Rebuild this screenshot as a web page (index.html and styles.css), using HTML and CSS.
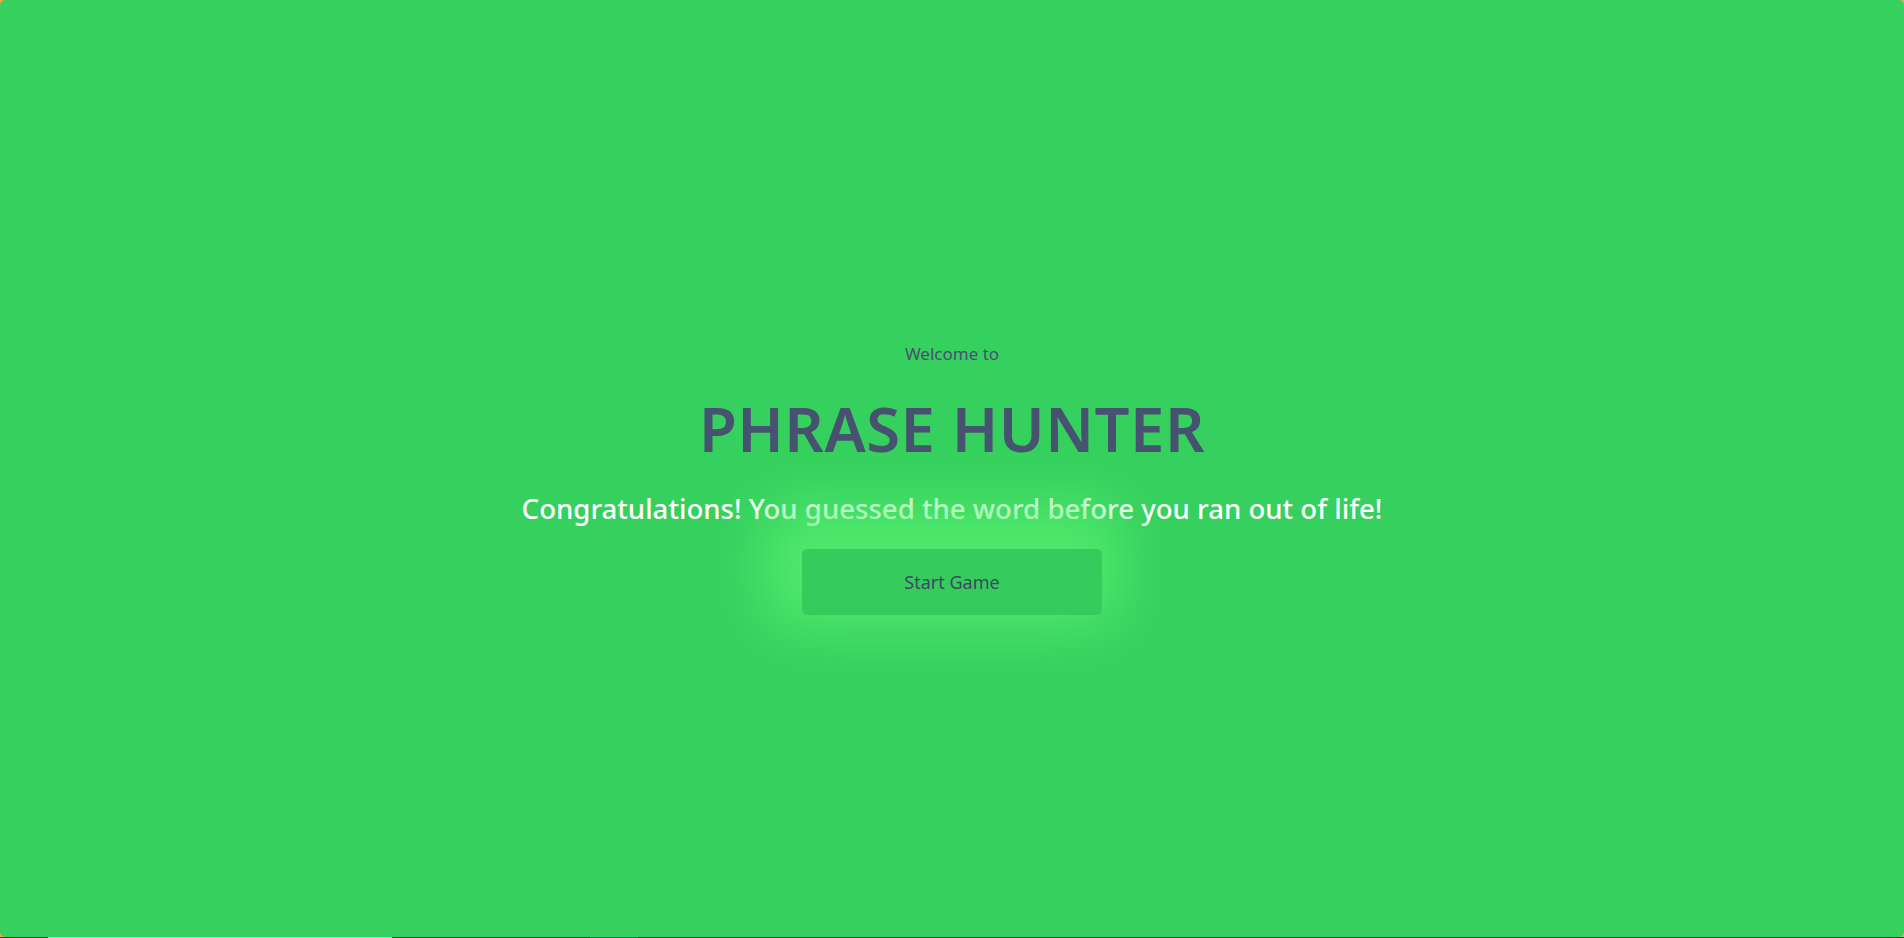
FILE: index.html
```html
<!DOCTYPE html>
<html lang="en">
<head>
<meta charset="utf-8">
<title>Phrase Hunter</title>
<link rel="stylesheet" href="styles.css">
</head>
<body>
<div class="page">
  <div class="overlay win">
    <p class="welcome">Welcome to</p>
    <h2 class="title">PHRASE HUNTER</h2>
    <h1 class="game-over-message">Congratulations! You guessed the word before you ran out of life!</h1>
    <button class="btn-reset">Start Game</button>
  </div>
  <div class="strip">
    <span class="seg seg-a"></span>
    <span class="seg seg-b"></span>
  </div>
</div>
</body>
</html>
```

FILE: styles.css
```css
html, body {
  margin: 0;
  padding: 0;
  height: 100%;
}
body {
  background: #f5a742;
  font-family: "Noto Sans", "Open Sans", sans-serif;
  overflow: hidden;
}
.page {
  height: 938px;
  display: flex;
  flex-direction: column;
}
.overlay {
  height: 937px;
  background: #36d05e;
  border-radius: 5px;
  display: flex;
  flex-direction: column;
  align-items: center;
  padding-top: 341px;
  box-sizing: border-box;
}
.welcome {
  margin: 0;
  font-size: 17px;
  line-height: 26px;
  color: #475270;
}
.title {
  margin: 28px 0 0;
  font-size: 61.5px;
  line-height: 66px;
  font-weight: 600;
  color: #475270;
  letter-spacing: 0.5px;
}
.game-over-message {
  margin: 28px 0 0;
  font-size: 27.6px;
  line-height: 38px;
  font-weight: 500;
  color: #ffffff;
}
.btn-reset {
  margin-top: 22px;
  width: 300px;
  height: 66px;
  border: none;
  border-radius: 5px;
  background: #35cc5d;
  color: #3b4a5e;
  font-family: inherit;
  font-size: 18px;
  box-shadow: -10px -16px 60px 28px rgba(86, 240, 112, 0.8);
}
.strip {
  height: 1px;
  background: #2f3a34;
  display: flex;
}
.seg-a {
  margin-left: 48px;
  width: 344px;
  background: #c9c9c9;
}
.seg-b {
  margin-left: 198px;
  width: 48px;
  background: #555;
}
```
